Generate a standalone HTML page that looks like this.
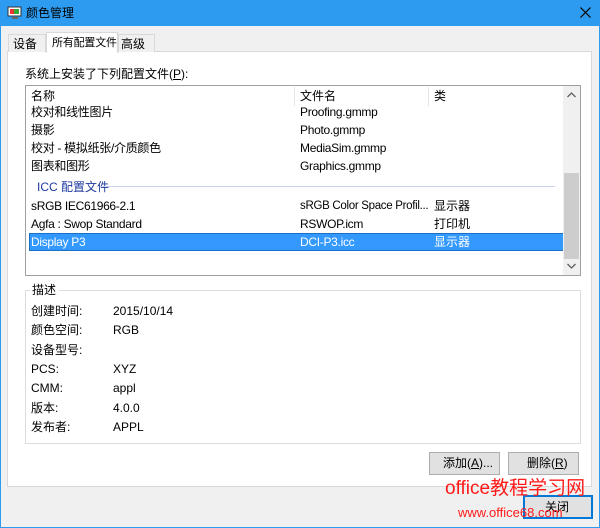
<!DOCTYPE html>
<html><head><meta charset="utf-8"><style>
*{margin:0;padding:0;box-sizing:border-box}
body{width:600px;height:528px;background:#f0f0f0;position:relative;overflow:hidden;font-family:"Liberation Sans","Noto Sans CJK SC",sans-serif;font-size:12px;color:#000}
.a{position:absolute;white-space:nowrap;line-height:16px}
.t{letter-spacing:-0.3px}
</style></head><body>
<div class="a" style="left:0;top:0;width:600px;height:26px;background:#2d9bf0"></div>
<div class="a" style="left:0;top:26px;width:1px;height:502px;background:#2d9bf0"></div>
<div class="a" style="left:599px;top:26px;width:1px;height:502px;background:#2d9bf0"></div>
<div class="a" style="left:0;top:527px;width:600px;height:1px;background:#2d9bf0"></div>
<svg class="a" style="left:7px;top:6px" width="16" height="14"><rect x="1" y="1" width="13" height="9" fill="#fff" stroke="#333"/><rect x="3" y="3" width="9" height="5" fill="#e33"/><rect x="7" y="3" width="5" height="5" fill="#3a3"/><rect x="5" y="11" width="6" height="2" fill="#666"/></svg>
<div class="a" style="left:26px;top:5px;color:#000">颜色管理</div>
<svg class="a" style="left:580px;top:7px" width="11" height="11"><path d="M0.5 0.5L10.5 10.5M10.5 0.5L0.5 10.5" stroke="#000" stroke-width="1.2"/></svg>

<div class="a" style="left:7px;top:51px;width:585px;height:436px;background:#fff;border:1px solid #d9d9d9"></div>
<div class="a" style="left:8px;top:34px;width:38px;height:18px;background:#f0f0f0;border:1px solid #d9d9d9;border-bottom:none"></div>
<div class="a" style="left:13px;top:36px">设备</div>
<div class="a" style="left:46px;top:32px;width:72px;height:21px;background:#fff;border:1px solid #d9d9d9;border-bottom:none"></div>
<div class="a" style="left:52px;top:35px;font-size:11px;letter-spacing:-0.2px">所有配置文件</div>
<div class="a" style="left:118px;top:34px;width:37px;height:18px;background:#f0f0f0;border:1px solid #d9d9d9;border-bottom:none"></div>
<div class="a" style="left:121px;top:36px">高级</div>

<div class="a" style="left:25px;top:66px">系统上安装了下列配置文件(<u>P</u>):</div>
<div class="a" style="left:25px;top:85px;width:556px;height:191px;border:1px solid #a0a0a0;background:#fff"></div>
<div class="a" style="left:294px;top:87px;width:1px;height:19px;background:#e5e5e5"></div>
<div class="a" style="left:428px;top:87px;width:1px;height:19px;background:#e5e5e5"></div>
<div class="a" style="left:31px;top:88px">名称</div>
<div class="a" style="left:300px;top:88px">文件名</div>
<div class="a" style="left:434px;top:88px">类</div>
<div class="a t" style="left:31px;top:104px">校对和线性图片</div><div class="a t" style="left:300px;top:104px">Proofing.gmmp</div>
<div class="a t" style="left:31px;top:122px">摄影</div><div class="a t" style="left:300px;top:122px">Photo.gmmp</div>
<div class="a t" style="left:31px;top:140px">校对 - 模拟纸张/介质颜色</div><div class="a t" style="left:300px;top:140px">MediaSim.gmmp</div>
<div class="a t" style="left:31px;top:158px">图表和图形</div><div class="a t" style="left:300px;top:158px">Graphics.gmmp</div>
<div class="a" style="left:37px;top:179px;color:#1e3aa0">ICC 配置文件</div>
<div class="a" style="left:100px;top:186px;width:455px;height:1px;background:#c8d0ee"></div>
<div class="a t" style="left:31px;top:198px">sRGB IEC61966-2.1</div><div class="a t" style="left:300px;top:198px;font-size:11.5px">sRGB Color Space Profil...</div><div class="a" style="left:434px;top:198px">显示器</div>
<div class="a t" style="left:31px;top:216px">Agfa : Swop Standard</div><div class="a t" style="left:300px;top:216px">RSWOP.icm</div><div class="a" style="left:434px;top:216px">打印机</div>
<div class="a" style="left:29px;top:233px;width:535px;height:18px;background:#3399ff;border:1px solid #1a6fc8"></div>
<div class="a t" style="left:31px;top:234px;color:#fff">Display P3</div><div class="a t" style="left:300px;top:234px;color:#fff">DCI-P3.icc</div><div class="a" style="left:434px;top:234px;color:#fff">显示器</div>
<div class="a" style="left:563px;top:86px;width:17px;height:189px;background:#f0f0f0"></div>
<div class="a" style="left:564px;top:173px;width:15px;height:86px;background:#cdcdcd"></div>
<svg class="a" style="left:567px;top:92px" width="9" height="6"><path d="M0.5 5L4.5 1L8.5 5" stroke="#606060" fill="none" stroke-width="1.3"/></svg>
<svg class="a" style="left:567px;top:263px" width="9" height="6"><path d="M0.5 1L4.5 5L8.5 1" stroke="#606060" fill="none" stroke-width="1.3"/></svg>

<div class="a" style="left:25px;top:290px;width:556px;height:154px;border:1px solid #dcdcdc"></div>
<div class="a" style="left:30px;top:282px;background:#fff;padding:0 3px 0 2px">描述</div>
<div class="a" style="left:31px;top:303px">创建时间:</div><div class="a" style="left:113px;top:303px">2015/10/14</div>
<div class="a" style="left:31px;top:322px">颜色空间:</div><div class="a" style="left:113px;top:322px">RGB</div>
<div class="a" style="left:31px;top:342px">设备型号:</div>
<div class="a" style="left:31px;top:361px">PCS:</div><div class="a" style="left:113px;top:361px">XYZ</div>
<div class="a" style="left:31px;top:380px">CMM:</div><div class="a" style="left:113px;top:380px">appl</div>
<div class="a" style="left:31px;top:400px">版本:</div><div class="a" style="left:113px;top:400px">4.0.0</div>
<div class="a" style="left:31px;top:419px">发布者:</div><div class="a" style="left:113px;top:419px">APPL</div>

<div class="a" style="left:429px;top:452px;width:71px;height:23px;background:#e1e1e1;border:1px solid #adadad"></div>
<div class="a" style="left:443px;top:455px">添加(<u>A</u>)...</div>
<div class="a" style="left:508px;top:452px;width:71px;height:23px;background:#e1e1e1;border:1px solid #adadad"></div>
<div class="a" style="left:527px;top:455px">删除(<u>R</u>)</div>
<div class="a" style="left:523px;top:495px;width:70px;height:24px;background:#e1e1e1;border:2px solid #0078d7"></div>
<div class="a" style="left:545px;top:499px">关闭</div>
<div class="a" style="left:445px;top:477px;color:#ff1a1a;font-size:19px;line-height:24px">office教程学习网</div>
<div class="a" style="left:458px;top:505px;color:#ff1a1a;font-size:13px;line-height:16px">www.office68.com</div>
</body></html>
